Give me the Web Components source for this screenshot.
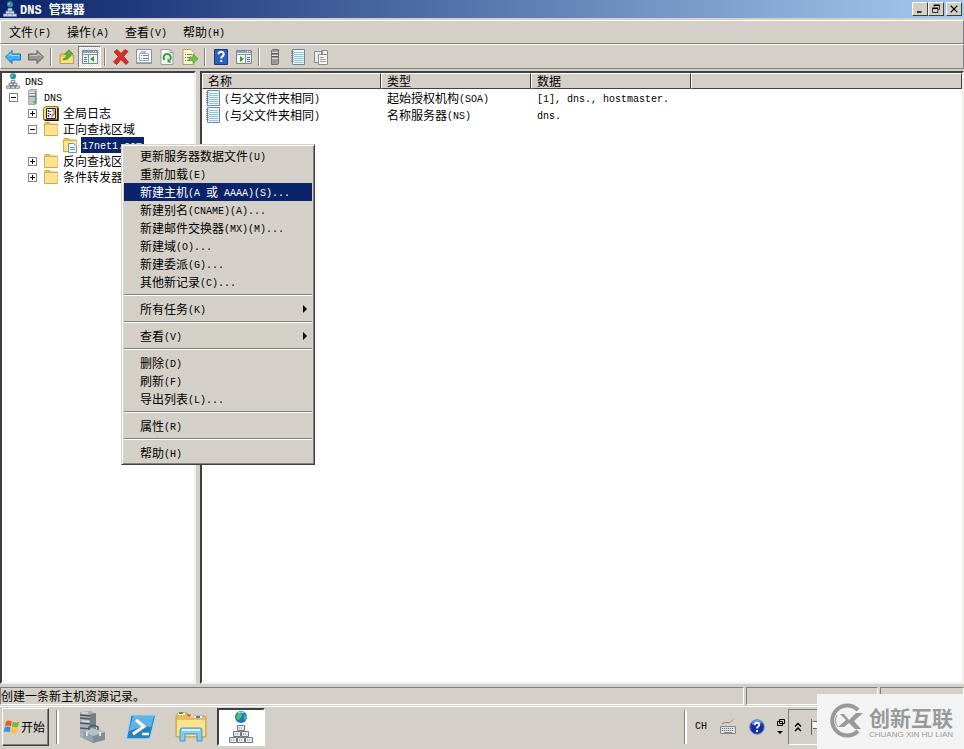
<!DOCTYPE html>
<html lang="zh-CN">
<head>
<meta charset="utf-8">
<title>DNS 管理器</title>
<style>
  html, body { height: 100%; margin: 0; }
  body {
    --face: #d4d0c8; --dark: #808080; --deep: #404040; --light: #ffffff; --select: #0a246a;
    display: flex; flex-direction: column; overflow: hidden; position: relative;
    background: var(--face); color: #000;
    font: 12px/16px "Noto Sans CJK SC", sans-serif;
  }
  dns-workspace { flex: 1; min-height: 0; }
</style>
</head>
<body>
<title-bar></title-bar>
<menu-bar></menu-bar>
<tool-bar></tool-bar>
<dns-workspace></dns-workspace>
<status-bar></status-bar>
<task-bar></task-bar>
<context-menu></context-menu>
<brand-mark></brand-mark>
<script>
const network = (c) => `<circle cx="8" cy="3.3" r="3" fill="#2288b8"/><path d="M6.5 1.5l2 .5-1 2-2 .2zM9 4l1.500-.5-.5 2z" fill="#5fd06c"/>
  <g fill="#dce4ec" stroke="${c}" stroke-width=".7"><path d="M6 7.400h4v2.300H6zM4 10.200h4v2.300H4zM8 10.200h4v2.300H8zM1.500 13h4.300v2.300H1.500zM5.800 13h4.400v2.300H5.800zM10.200 13h4.300v2.300h-4.300z"/></g>`;
const folder = `<path d="M1.500 2.500l1-1h4l1 1.500h7v11.500h-13z" fill="#eab94c" stroke="#d3a848"/><path d="M2 4.500h12.500v9.500H2z" fill="#ffe28c"/><path d="M2 5h12.500" stroke="#fff3bd"/>`;
const notebook = `<path d="M2.500 .5h12v15h-12z" fill="#eef7fd" stroke="#6f8797"/><path d="M4 3.500h9.500M4 5.500h9.500M4 7.500h9.500M4 9.500h9.500M4 11.500h9.500M4 13.500h9.500" stroke="#8cc3e0"/><path d="M1 2.500h2.500M1 4.500h2.500M1 6.500h2.500M1 8.500h2.500M1 10.500h2.500M1 12.500h2.500" stroke="#7b8790"/>`;
const pane = `<path d="M.5 1.500h15v13H.5z" fill="#f4f7fa" stroke="#7b8794"/><path d="M1 2h14v2H1z" fill="#8ba4be"/><path d="M1 5.500h14" stroke="#8794a1"/><path d="M11 2.500h1M13 2.500h1" stroke="#fff"/>`;
const help = `<path d="M1.500.5h13v15h-13z" fill="#2d5fc2" stroke="#173a85"/><path d="M5.500 5.300C5.500 1.800 11 2 10.700 5.300c-.2 1.900-2.500 2-2.500 4.200M8.200 11v2" fill="none" stroke="#fff" stroke-width="2"/>`;
const ICONS = {
  network: network('#5c6874'),
  networkLight: network('#8aa0c8'),
  back: `<path d="M.5 8l6.500-6.500v3.500h8.500v6H7v3.500z" fill="#3eb2ee" stroke="#1b74b4"/><path d="M3 7.500l3-3v2h8" fill="none" stroke="#9be0ff"/>`,
  forward: `<path d="M15.500 8L9 1.500v3.500H.5v6H9v3.500z" fill="#969696" stroke="#606060"/><path d="M2 6.500h8v-2l3 3" fill="none" stroke="#c4c4c4"/>`,
  up: `<path d="M1 6l1-1h4l1 1h7.500v8.500H1z" fill="#f0c758" stroke="#c9973a"/><path d="M2 8h12v6H2z" fill="#ffe48a"/><path d="M4 10c3-1 4-3 4-5H5.500L10 .8 14 5h-2.500c0 4-3.500 6-7.500 6z" fill="#55b82b" stroke="#34851a" stroke-width=".6"/>`,
  tree: pane + `<path d="M6.500 6v8" stroke="#8794a1"/><path d="M2 8.500h3M2 10.500h3M2 12.500h3" stroke="#4779a8"/><path d="M12 7v6l-4-3z" fill="#35a32c"/>`,
  action: pane + `<path d="M9.500 6v8" stroke="#8794a1"/><path d="M11 8.500h3M11 10.500h3M11 12.500h3" stroke="#4779a8"/><path d="M4 7v6l4-3z" fill="#35a32c"/>`,
  remove: `<path d="M1 3l3-2.500 4 4 4-4L15 2.500 10.500 7.500l5 5.500-2.500 2.500-5-5-4.500 5L.5 13l5-5.500z" fill="#dc2c28" stroke="#ae1714" stroke-width=".8"/>`,
  properties: `<path d="M.5 .5h15v14H.5z" fill="#f4f6f8" stroke="#8b949c"/><path d="M1 13.500h14M3.500 4.500h9v7h-9z" fill="#fff" stroke="#9aaab9"/><path d="M5 3h5M5 6.500h1M7 6.500h5M5 9.500h1M7 9.500h5" stroke="#5f86b2"/>`,
  refresh: `<path d="M2 .5h9l3 3v12H2z" fill="#fbfbfb" stroke="#9c9c9c"/><path d="M11 .5v3h3" fill="none" stroke="#9c9c9c"/><path d="M5.600 11A3.600 3.600 0 1 1 10.800 11" fill="none" stroke="#2da02d" stroke-width="2"/><path d="M8.500 9v4.500h4z" fill="#2da02d"/>`,
  export: `<path d="M1 .5h8l3 3v12H1z" fill="#fff6cd" stroke="#aa9d70"/><path d="M3 5.500h1M5 5.500h5M3 8.500h1M5 8.500h3M3 11.500h1M5 11.500h3" stroke="#6b7884"/><path d="M7 8h4V5l5 4.700-5 4.700v-3H7z" fill="#71c937" stroke="#48962a" stroke-width=".7"/>`,
  help,
  server: `<path d="M4.500 1.500l2-1h6v14l-1 1h-7z" fill="#b9c6cb" stroke="#8a999e" stroke-width=".7"/><path d="M5 3.500h6M5 5.500h6" stroke="#eef5f6"/><path d="M5 4.500h6M5 7.500h6" stroke="#6d8086"/><path d="M9 12h2v2H9z" fill="#4cd03c"/><path d="M11.500 2v13" stroke="#79898c"/>`,
  serverGrey: `<path d="M4.500 1.500l1-1h6v14l-1 1h-6z" fill="#9a9a98" stroke="#70706e"/><path d="M5 3.500h6M5 6.500h6M5 9.500h6" stroke="#ddd"/><path d="M5 4.500h6M5 7.500h6" stroke="#555"/>`,
  notebook,
  copy: `<path d="M1.500 2.500h8v11h-8zM8.500 1.500h6v5h-6z" fill="#ececea" stroke="#8b8b89"/><path d="M5.500 5.500h9v10h-9z" fill="#fafafa" stroke="#8b8b89"/><path d="M7 8.500h4M7 10.500h6M7 12.500h6" stroke="#999"/>`,
  folder,
  log: `<path d="M.5 3.500l2-2h12v13H.5z" fill="#f6dd68" stroke="#8c7325"/><path d="M3.500 3.500h9v10h-9z" fill="#fff" stroke="#222"/><path d="M5.500 5v2M5.500 8v1M5.500 10v2M7.500 6v1M7.500 9v1" stroke="#223c9a" stroke-width="1.500"/><path d="M9 5h2v5H9M9 10v2.500" fill="none" stroke="#c32c20"/><path d="M15 2.500v13H1.500" fill="none" stroke="#111" stroke-width="1.500"/>`,
  zone: folder + `<path d="M6.500 6.500h5l3 3v6h-8z" fill="#f4faff" stroke="#7992a4"/><path d="M8 10.500h5M8 12.500h5" stroke="#5b9bc0"/>`,
  windows: `<path d="M2 2.500C4 1 6 1.500 7.800 2.500L6.800 7.400C5 6.200 3 6.200 1 7.300z" fill="#ee5a24"/><path d="M8.800 2.800c2 1 4 1 6.400-.3l-1.200 5c-2 1.200-4.200 1.200-6.200.1z" fill="#76bb2e"/><path d="M.8 8.300c2-1.100 4-1 5.800.1l-1.100 4.800C4 12.200 2 12.100-.2 13z" fill="#3e8ede"/><path d="M7.600 8.700c2 1 4 1 6.200-.1l-1.200 4.900c-2 1.100-4 1.100-6.100.1z" fill="#fbc32c"/>`,
  keyboard: `<path d="M.5 7.500h15v7H.5z" fill="#ddd" stroke="#888"/><path d="M2 9.500h12M2 11.500h12" stroke="#777" stroke-dasharray="1 1"/><path d="M4 13.500h8M2 5l3-1.500h5l3-3" stroke="#888" fill="none"/>`,
  helpRound: `<circle cx="8" cy="8" r="7.300" fill="#1230a8" stroke="#7d8cc8"/><path d="M3 6a5 5 0 0 1 10-1c-3-2-7-1-10 1z" fill="#6f8fe8"/><path d="M5.800 6.200c0-3.300 4.800-3 4.500-.2C10 7.700 8 7.500 8 9.400M8 11v2" fill="none" stroke="#fff" stroke-width="1.900"/>`,
  minimize: `<path d="M4 11h6v2H4z"/>`,
  restore: `<path d="M5 2h8v7h-2v-1h1V4H6v1H5z"/><path d="M3 6h8v7H3zM4 8v4h6V8z" fill-rule="evenodd"/>`,
  close: `<path d="M3.500 3.500l9 9M12.500 3.500l-9 9" stroke="#000" stroke-width="1.800"/>`
};
const BIG = {
  manager: `<path d="M5 1l11-1 5 3v23l-6 4-10-4z" fill="#a9b1b6"/><path d="M15 3l6-1v25l-6 3z" fill="#747e85"/><path d="M5 4l10 1M5 7l10 1M5 12l10 1M5 17l10 1" stroke="#4d575e" stroke-width="1.500"/><path d="M7 2h6M7 10l7 .5" stroke="#edf1f3"/><path d="M8 20l9-3 13 4v8l-12 3-10-5z" fill="#7f8d97"/><path d="M8 20l9-3 13 4-12 4z" fill="#b7c1c8"/><path d="M8 20l10 5v7l-10-5z" fill="#94a2ac"/><path d="M14 19v-3q4-3 9 0v3" fill="none" stroke="#4a555d" stroke-width="1.500"/><path d="M12 21v4M25 21v4" stroke="#eef2f4" stroke-width="1.500"/>`,
  shell: `<path d="M7 4h22q2 0 1.500 2l-5 20q-.5 2-2.500 2H3q-2 0-1.500-2l4-20Q5 4 7 4z" fill="#2c80bc" stroke="#a9d6ee" stroke-width="1.500"/><path d="M8 5h21l-3 11C17 14 10 18 4 20z" fill="#60b4e2"/><path d="M11 9l8 6.500L8 23" fill="none" stroke="#fff" stroke-width="3"/><path d="M17 23h7" stroke="#fff" stroke-width="2.500"/>`,
  explorer: `<path d="M1 5l2-3h9l2 3h16l1 2v19H1z" fill="#e7bd58" stroke="#caa144"/><path d="M3 3h7M12 5h6M19 6h8" stroke="#fff" stroke-width="2"/><path d="M4 2h4" stroke="#3aa944" stroke-width="2"/><path d="M12 4.500h4" stroke="#d95131" stroke-width="2"/><path d="M21 6h4" stroke="#3d83c2" stroke-width="2"/><path d="M2 9h28v16H2z" fill="#fbe48f"/><path d="M5 30V19q0-2 2-2h18q2 0 2 2v11h-5v-7H10v7z" fill="#86caf0" stroke="#3e96cc"/><path d="M7 19h18" stroke="#d7f1ff" stroke-width="2"/>`,
  dns: `<circle cx="16" cy="6" r="6" fill="#1b78c8"/><path d="M12 3l4-2 1 4-3 4-3-1zM19 4l3 1-1 4-2-1z" fill="#4cc45a"/><path d="M13 2q3-2 6 0" stroke="#bde6ff" fill="none"/><g fill="#e9edf0" stroke="#6f7880"><path d="M12.500 14.500h7v5h-7zM8.500 20.500h7v5h-7zM16.500 20.500h7v5h-7zM4.500 26.500h7v5h-7zM12.500 26.500h7v5h-7zM20.500 26.500h7v5h-7z"/></g><path d="M14 17h4M10 23h4M18 23h4M6 29h4M14 29h4M22 29h4" stroke="#6f7880" stroke-dasharray="1 1"/>`
};
/* Half-width runs use a monospaced face at half the width of a Chinese character. */
const mix = (s) => s.replace(/[\x20-\x7e]+/g, (m) => `<span class="half">${m}</span>`);
const icon = (name) => `<svg class="icon" viewBox="0 0 16 16" aria-hidden="true">${ICONS[name]}</svg>`;
const big = (name) => `<svg class="big" viewBox="0 0 32 32" aria-hidden="true">${BIG[name]}</svg>`;
const BASE = `
  :host, * { box-sizing: border-box; }
  button { font: inherit; color: inherit; background: none; border: 0; padding: 0; margin: 0; text-align: left; }
  .half { font-family: "Liberation Mono", monospace; font-size: 10px; line-height: 10px; vertical-align: 1px; white-space: pre; }
  .icon { width: 16px; height: 16px; display: block; flex: none; }
  .big { width: 32px; height: 32px; display: block; }
`;
function define(tag, css, html) {
  const template = document.createElement('template');
  template.innerHTML = `<style>${BASE}${css}</style>${html}`;
  customElements.define(tag, class extends HTMLElement {
    constructor() {
      super();
      this.attachShadow({ mode: 'open' }).append(template.content.cloneNode(true));
    }
  });
}

define('title-bar', `
  :host { display: flex; align-items: center; height: 18px; padding: 0 2px; gap: 2px; color: #fff;
    background: linear-gradient(to right, #0a246a, #a6caf0); font-weight: bold; font-size: 12px; }
  h1 { flex: 1; margin: 0; font: inherit; line-height: 18px; }
  .half { font-size: 12px; vertical-align: baseline; }
  .controls { display: flex; }
  .controls button { width: 16px; height: 14px; background: var(--face); border: 1px solid; border-color: #fff #404040 #404040 #fff; }
  .controls button:last-child { margin-left: 2px; }
  .controls .icon { width: 14px; height: 12px; }
`, `${icon('networkLight')}<h1>${mix('DNS 管理器')}</h1>
  <div class="controls"><button aria-label="最小化">${icon('minimize')}</button><button aria-label="还原">${icon('restore')}</button><button aria-label="关闭">${icon('close')}</button></div>`);

define('menu-bar', `
  :host { display: block; margin-top: 2px; border: 1px solid; border-color: #fff var(--dark) var(--dark) #fff; }
  nav { display: flex; height: 22px; }
  button { padding: 0 8px; }
`, `<nav>${['文件(F)', '操作(A)', '查看(V)', '帮助(H)'].map((t) => `<button>${mix(t)}</button>`).join('')}</nav>`);

const tools = [['back', '后退'], ['forward', '前进'], 0, ['up', '向上'], ['tree', '显示控制台树', 1], 0, ['remove', '删除'], ['properties', '属性'],
  ['refresh', '刷新'], ['export', '导出列表'], 0, ['help', '帮助'], ['action', '显示操作窗格'], 0, ['serverGrey', '新建服务器'], ['notebook', '新建记录'], ['copy', '新建区域']];
define('tool-bar', `
  :host { display: flex; align-items: center; height: 25px; padding: 0; border: 1px solid; border-color: #fff var(--dark) var(--dark) #fff; }
  button { width: 23px; height: 22px; display: grid; place-items: center; }
  button.pressed { background: repeating-conic-gradient(#fff 0 25%, #e0ddd8 0 50%) 0 0 / 2px 2px; border: 1px solid; border-color: var(--dark) #fff #fff var(--dark); }
  i { width: 2px; height: 18px; margin: 0 3px; border-left: 1px solid var(--dark); border-right: 1px solid #fff; }
`, tools.map((t) => t ? `<button aria-label="${t[1]}" ${t[2] ? 'class="pressed" aria-pressed="true"' : ''}>${icon(t[0])}</button>` : '<i></i>').join(''));

define('dns-workspace', `
  :host { display: flex; gap: 4px; padding: 2px 0; }
  .frame { background: #fff; border: 2px solid; border-color: var(--deep) #f2f0ec #f2f0ec var(--deep); min-width: 0; overflow: hidden; }
  dns-tree { flex: 0 0 196px; }
  dns-records { flex: 1; }
`, `<dns-tree class="frame"></dns-tree><dns-records class="frame"></dns-records>`);

const nodes = [[0, '', 'network', 'DNS'], [1, '-', 'server', 'DNS'], [2, '+', 'log', '全局日志'], [2, '-', 'folder', '正向查找区域'],
  [3, '', 'zone', '17net1.com', 1], [2, '+', 'folder', '反向查找区域'], [2, '+', 'folder', '条件转发器']];
define('dns-tree', `
  :host { display: block; }
  ul { list-style: none; margin: 0; padding: 0; }
  li { display: flex; align-items: center; height: 16px; padding-left: calc(2px + 19px * (var(--level) - 1)); white-space: nowrap; }
  li.root { padding-left: 3px; }
  .slot { flex: none; width: 20px; display: flex; padding-left: 5px; }
  .root .slot { display: none; }
  .slot button { width: 9px; height: 9px; border: 1px solid #848484;
    background: linear-gradient(#000, #000) center / 5px 1px no-repeat, linear-gradient(#000, #000) center / 1px 5px no-repeat; }
  .slot button.open { background: linear-gradient(#000, #000) center / 5px 1px no-repeat; }
  .label { padding: 0 2px 0 1px; margin-left: 3px; }
  .selected .label { background: var(--select); color: #fff; }
`, `<ul role="tree">${nodes.map(([l, t, i, s, sel]) => `<li role="treeitem" class="${l ? '' : 'root'} ${sel ? 'selected' : ''}" style="--level:${l}"><span class="slot">${t ? `<button class="${t === '-' ? 'open' : ''}" aria-label="${t === '-' ? '折叠' : '展开'}"></button>` : ''}</span>${icon(i)}<span class="label">${mix(s)}</span></li>`).join('')}</ul>`);

const rows = [['(与父文件夹相同)', '起始授权机构(SOA)', '[1], dns., hostmaster.'], ['(与父文件夹相同)', '名称服务器(NS)', 'dns.']];
define('dns-records', `
  :host { display: block; }
  table { width: 100%; table-layout: fixed; border-collapse: separate; border-spacing: 0; }
  .name { width: 179px; } .type { width: 150px; } .data { width: 160px; }
  th { height: 16px; padding: 0 5px; background: var(--face); font-weight: normal; text-align: left; line-height: 14px;
    border: 1px solid; border-color: #fff var(--deep) var(--deep) #fff; }
  td { height: 17px; padding: 0 0 0 6px; white-space: nowrap; }
  td:first-child { padding-left: 3px; }
  td div { display: flex; align-items: center; gap: 3px; height: 17px; }
`, `<table><thead><tr><th class="name">名称</th><th class="type">类型</th><th class="data">数据</th><th aria-label="空"></th></tr></thead>
  <tbody>${rows.map((r) => `<tr><td><div>${icon('notebook')}<span>${mix(r[0])}</span></div></td><td><div><span>${mix(r[1])}</span></div></td><td><div><span>${mix(r[2])}</span></div></td><td></td></tr>`).join('')}</tbody></table>`);

define('status-bar', `
  :host { display: flex; gap: 2px; height: 20px; padding: 1px 0; }
  div { border: 1px solid; border-color: var(--dark) #fff #fff var(--dark); line-height: 16px; }
  .message { flex: 1; } .part { width: 132px; } .end { width: 84px; }
`, `<div class="message" role="status">创建一条新主机资源记录。</div><div class="part"></div><div class="end"></div>`);

define('task-bar', `
  :host { display: flex; align-items: center; height: 43px; padding: 1px 0 3px 2px; border-top: 1px solid #fff; }
  .start { display: flex; align-items: center; gap: 1px; height: 38px; padding: 0 3px 0 1px; border: 1px solid; border-color: #fff #404040 #404040 #fff; box-shadow: inset -1px -1px var(--dark); }
  .grip { width: 3px; height: 34px; margin: 0 8px 0 7px; border-left: 1px solid var(--dark); border-right: 2px solid #fff; }
  .apps { display: flex; gap: 2px; flex: 1; }
  .apps button { width: 48px; height: 38px; display: grid; place-items: center; }
  .apps .active { background: #fff; border: 2px solid; border-color: #404040 #fff #fff #404040; }
  .tray { display: flex; flex: none; align-items: center; gap: 11px; }
  .language { display: flex; align-items: center; gap: 13px; }
  .options { width: 9px; height: 18px; }
  .notices { width: 176px; height: 36px; margin-left: -8px; padding-left: 5px; display: flex; align-items: center; gap: 8px; border: 1px solid var(--dark); border-bottom-color: #fff; }
  .notices svg { width: 8px; height: 16px; display: block; }
`, `<button class="start">${icon('windows')}<span>开始</span></button><div class="grip"></div>
  <div class="apps"><button aria-label="服务器管理器">${big('manager')}</button><button aria-label="PowerShell">${big('shell')}</button><button aria-label="资源管理器">${big('explorer')}</button><button class="active" aria-label="DNS">${big('dns')}</button></div>
  <div class="grip"></div>
  <div class="tray"><div class="language">${mix('CH')}${icon('keyboard')}${icon('helpRound')}</div>
  <button class="options" aria-label="语言栏选项"><svg viewBox="0 0 9 18" width="9" height="18"><path d="M3.500 1.500h5v4h-5zM1.500 3.500h5v4h-5z" fill="#d4d0c8" stroke="#000"/><path d="M1 13h6l-3 3z"/></svg></button>
  <div class="notices"><button aria-label="显示隐藏的图标"><svg viewBox="0 0 8 16"><path d="M1 7.500l3-3 3 3M1 12l3-3 3 3" fill="none" stroke="#000" stroke-width="1.500"/></svg></button><svg viewBox="0 0 8 16"><path d="M1.500 0v16M3 2.500h5M3 9.500h5" stroke="#666"/><path d="M3 3h5v6H3z" fill="#fff"/></svg></div></div>`);

const groups = [['更新服务器数据文件(U)', '重新加载(E)', '新建主机(A 或 AAAA)(S)...', '新建别名(CNAME)(A)...', '新建邮件交换器(MX)(M)...', '新建域(O)...', '新建委派(G)...', '其他新记录(C)...'],
  ['所有任务(K)>'], ['查看(V)>'], ['删除(D)', '刷新(F)', '导出列表(L)...'], ['属性(R)'], ['帮助(H)']];
define('context-menu', `
  :host { position: absolute; left: 121px; top: 144px; width: 194px; padding: 2px; background: var(--face);
    border: 1px solid; border-color: var(--face) #404040 #404040 var(--face); box-shadow: inset 1px 1px #fff, inset -1px -1px var(--dark); }
  button { display: flex; align-items: center; justify-content: space-between; width: 100%; height: 18px; padding: 0 5px 0 16px; }
  button.current { background: var(--select); color: #fff; }
  section + section { border-top: 1px solid var(--dark); box-shadow: inset 0 1px #fff; margin-top: 3px; padding-top: 5px; }
  svg { width: 4px; height: 8px; }
`, groups.map((g) => `<section role="group">${g.map((t) => {
    const sub = t.endsWith('>');
    return `<button role="menuitem" class="${t.startsWith('新建主机') ? 'current' : ''}"><span>${mix(sub ? t.slice(0, -1) : t)}</span>${sub ? '<svg viewBox="0 0 4 8" aria-hidden="true"><path d="M0 0l4 4-4 4z"/></svg>' : ''}</button>`;
  }).join('')}</section>`).join(''));

define('brand-mark', `
  :host { position: absolute; right: 0; bottom: 0; display: flex; align-items: center; gap: 5px; width: 147px; height: 55px; padding-left: 12px; padding-bottom: 2px; background: #f3f3f3; color: #999; }
  .logo { width: 35px; height: 35px; flex: none; }
  strong { display: block; font-size: 21px; line-height: 28px; }
  small { display: block; font: 8px/8px "Liberation Sans", sans-serif; white-space: nowrap; }
`, `<svg class="logo" viewBox="0 0 35 35" fill="none" stroke="#999" aria-hidden="true"><path d="M29 7A15 15 0 1 0 29 28" stroke-width="4"/><path d="M11 11h4l5 6 7-7h7l-9 8 7 8h-6l-6-6-5 4h-6l8-7z" fill="#999" stroke="none"/><path d="M8 12a10 10 0 0 0 1 12" stroke-width="1"/></svg><div><strong>创新互联</strong><small>CHUANG XIN HU LIAN</small></div>`);
</script>
</body>
</html>
